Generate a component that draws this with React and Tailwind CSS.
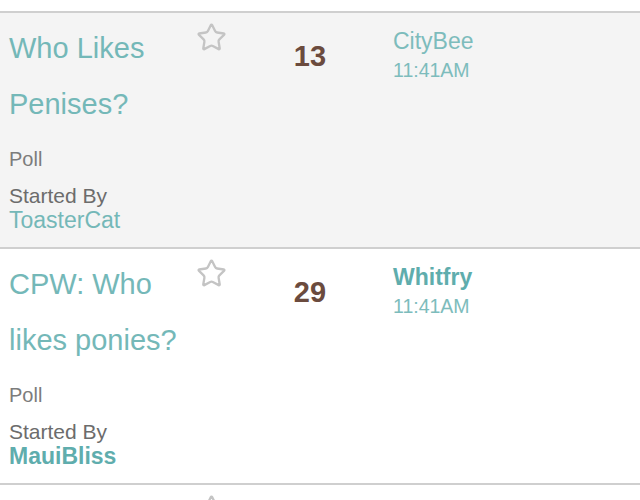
import { Star } from "lucide-react";

const threads = [
  {
    title: ["Who Likes", "Penises?"],
    type: "Poll",
    starter: "ToasterCat",
    starterBold: false,
    replies: 13,
    lastUser: "CityBee",
    lastBold: false,
    time: "11:41AM",
    shaded: true,
  },
  {
    title: ["CPW: Who", "likes ponies?"],
    type: "Poll",
    starter: "MauiBliss",
    starterBold: true,
    replies: 29,
    lastUser: "Whitfry",
    lastBold: true,
    time: "11:41AM",
    shaded: false,
  },
];

const StarButton = () => (
  <div className="w-[32px] shrink-0 pt-[2px] pl-[1px]">
    <Star size={31} strokeWidth={1.8} className="text-[#c4c4c4] blur-[0.4px]" />
  </div>
);

const ThreadRow = ({ t }) => (
  <div
    className={`flex pl-[9px] pt-[7px] pb-[15px] border-b-2 border-[#cfcfcf] ${
      t.shaded ? "bg-[#f4f4f4]" : "bg-white"
    }`}
  >
    <div className="w-[186px] shrink-0">
      <div className="text-[29px] leading-[56px] text-[#74b8b8]">
        {t.title[0]}
        <br />
        {t.title[1]}
      </div>
      <div className="mt-[15px] text-[20px] leading-[24px] text-[#7c7c7c]">{t.type}</div>
      <div className="mt-[13px] text-[21px] leading-[24px] text-[#6c6c6c]">Started By</div>
      <div
        className={`leading-[24px] ${
          t.starterBold ? "font-bold text-[23px] text-[#5fadad]" : "text-[23px] text-[#74b8b8]"
        }`}
      >
        {t.starter}
      </div>
    </div>
    <StarButton />
    <div className="w-[166px] shrink-0 pt-[20px] text-center text-[29px] leading-[32px] font-bold text-[#6b4b3e]">
      {t.replies}
    </div>
    <div className="pt-[8px]">
      <div
        className={`text-[23px] leading-[26px] ${
          t.lastBold ? "font-bold text-[22px] text-[#5fadad]" : "text-[#7dbcbc]"
        }`}
      >
        {t.lastUser}
      </div>
      <div className="mt-[4px] text-[19.5px] leading-[24px] text-[#7dbcbc]">{t.time}</div>
    </div>
  </div>
);

export default function App() {
  return (
    <div
      className="h-[500px] w-[640px] overflow-hidden bg-white"
      style={{ fontFamily: '"Liberation Sans", Arial, sans-serif' }}
    >
      <div className="h-[11px]" />
      <div className="border-t-2 border-[#cfcfcf]">
        {threads.map((t, i) => (
          <ThreadRow key={i} t={t} />
        ))}
        {/* next row, only its star peeks into view */}
        <div className="flex pl-[9px] pt-[7px] h-[60px]">
          <div className="w-[186px] shrink-0" />
          <StarButton />
        </div>
      </div>
    </div>
  );
}
